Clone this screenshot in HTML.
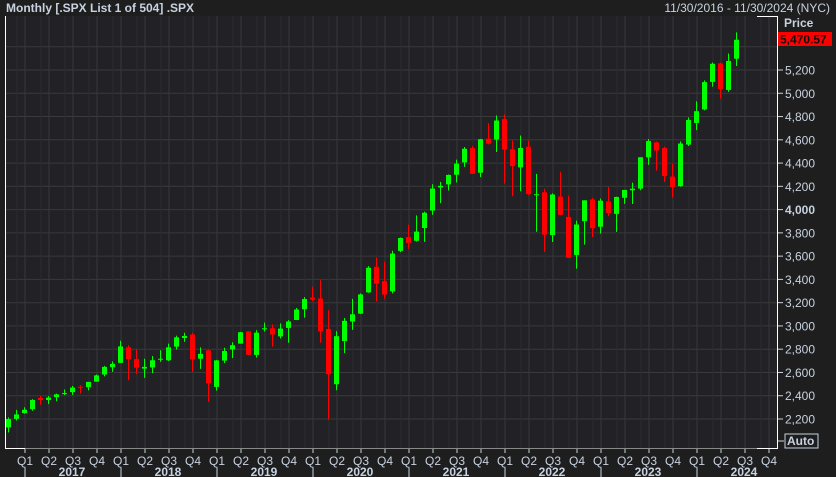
<!DOCTYPE html>
<html><head><meta charset="utf-8"><style>
html,body{margin:0;padding:0;background:#1e1e1e;width:836px;height:477px;overflow:hidden}
svg{display:block;font-family:"Liberation Sans",sans-serif}
</style></head><body>
<svg id="s" width="836" height="477" xmlns="http://www.w3.org/2000/svg">
<rect width="836" height="477" fill="#1e1e1e"/>
<rect x="5" y="16" width="772" height="433" fill="#222125"/>
<text x="6" y="12" font-size="12" font-weight="bold" fill="#c8d2e0">Monthly [.SPX List 1 of 504] .SPX</text>
<text x="830" y="12" font-size="12" fill="#c8d2e0" text-anchor="end">11/30/2016 - 11/30/2024 (NYC)</text>
<text x="784" y="27" font-size="12" font-weight="bold" fill="#c8d2e0">Price</text>
<g id="g"></g>
<rect x="778" y="32" width="54" height="14" fill="#ff0000"/>
<text x="780" y="43.5" font-size="12" font-weight="bold" fill="#111">5,470.57</text>
<rect x="785" y="434" width="33" height="14" fill="none" stroke="#c8d2e0" stroke-width="1"/>
<text x="787" y="445" font-size="12" font-weight="bold" fill="#c8d2e0">Auto</text>
<line x1="778" y1="441" x2="784" y2="441" stroke="#c8d2e0"/>
</svg>
<script>
var d=[[2128,2214,2084,2199],[2201,2278,2187,2239],[2251,2301,2245,2279],[2285,2371,2271,2364],[2381,2401,2322,2363],[2363,2398,2328,2384],[2388,2418,2353,2412],[2415,2454,2405,2423],[2431,2484,2407,2470],[2477,2491,2417,2472],[2474,2519,2446,2519],[2521,2582,2520,2575],[2583,2657,2566,2648],[2645,2695,2605,2674],[2683,2873,2682,2824],[2816,2835,2533,2714],[2715,2801,2585,2641],[2633,2718,2553,2648],[2643,2742,2594,2705],[2718,2791,2691,2718],[2705,2848,2699,2816],[2822,2917,2796,2902],[2896,2941,2864,2914],[2926,2940,2604,2712],[2718,2816,2631,2760],[2790,2800,2347,2507],[2476,2708,2444,2704],[2702,2813,2681,2784],[2798,2860,2723,2834],[2848,2949,2848,2946],[2953,2954,2751,2752],[2751,2964,2728,2942],[2971,3028,2952,2980],[2980,3014,2822,2926],[2910,3022,2892,2977],[2983,3050,2855,3038],[3051,3154,3050,3141],[3144,3248,3070,3231],[3244,3338,3214,3226],[3236,3394,2855,2954],[2974,3136,2192,2585],[2499,2955,2447,2912],[2870,3068,2766,3044],[3038,3233,2966,3100],[3105,3280,3101,3271],[3289,3514,3284,3500],[3508,3588,3210,3363],[3385,3550,3234,3270],[3297,3646,3280,3622],[3645,3760,3633,3756],[3764,3870,3662,3714],[3732,3950,3725,3811],[3842,3983,3723,3973],[3992,4218,3955,4181],[4191,4238,4056,4204],[4217,4302,4164,4298],[4300,4430,4233,4395],[4406,4538,4367,4523],[4529,4546,4306,4308],[4317,4608,4279,4605],[4610,4743,4560,4567],[4602,4809,4495,4766],[4778,4818,4223,4516],[4519,4595,4115,4374],[4363,4637,4158,4530],[4540,4593,4124,4132],[4131,4307,3810,4132],[4149,4178,3637,3785],[3781,4140,3721,4130],[4112,4325,3955,3955],[3937,4119,3584,3586],[3610,3905,3492,3872],[3901,4080,3699,4080],[4087,4101,3765,3840],[3853,4095,3794,4077],[4071,4195,3943,3970],[3963,4111,3809,4109],[4102,4170,4049,4169],[4166,4232,4048,4180],[4181,4449,4166,4450],[4450,4607,4385,4589],[4578,4584,4335,4508],[4530,4541,4238,4288],[4284,4393,4104,4194],[4201,4587,4197,4568],[4559,4793,4547,4770],[4745,4931,4683,4846],[4861,5111,4853,5096],[5098,5265,5057,5254],[5257,5264,4954,5036],[5029,5342,5012,5278],[5297,5523,5234,5460]];
function Y(p){return 419-(p-2200)*0.11633;}
var h='';
for(var p=2200;p<=5400;p+=200){var y=Y(p).toFixed(1);h+='<line x1="5" x2="777" y1="'+y+'" y2="'+y+'" stroke="#3a3a3c"/>';}
for(var x=25;x<777;x+=24){h+='<line x1="'+x+'" x2="'+x+'" y1="16" y2="449" stroke="#38383a"/>';}
for(var x=17;x<777;x+=24){h+='<line x1="'+x+'" x2="'+x+'" y1="16" y2="449" stroke="#2c2c2e"/>';}
for(var i=0;i<d.length;i++){var c=d[i],x=8+8*i,up=c[3]>=c[0],col=up?'#00ff00':'#ff0000';
var t=Y(Math.max(c[0],c[3])),b=Y(Math.min(c[0],c[3]));if(b-t<1)b=t+1;
h+='<line x1="'+x+'.5" x2="'+x+'.5" y1="'+Y(c[1])+'" y2="'+Y(c[2])+'" stroke="'+col+'"/>';
h+='<rect x="'+(x-2)+'" y="'+t+'" width="5" height="'+(b-t)+'" fill="'+col+'"/>';}
h+='<line x1="5.5" y1="16" x2="5.5" y2="449" stroke="#fff"/><line x1="5" y1="448.5" x2="25" y2="448.5" stroke="#fff"/>';
h+='<line x1="25" y1="448.5" x2="777" y2="448.5" stroke="#888"/><line x1="757" y1="448.5" x2="777" y2="448.5" stroke="#fff"/>';
h+='<line x1="757" y1="16.5" x2="777" y2="16.5" stroke="#fff"/><line x1="777.5" y1="16" x2="777.5" y2="449" stroke="#fff"/>';
for(var p=2200;p<=5200;p+=200){var y=Y(p);h+='<line x1="778" x2="783" y1="'+y+'" y2="'+y+'" stroke="#c8d2e0"/>';
h+='<text x="785" y="'+(y+4.5)+'" font-size="12" fill="#c8d2e0"'+(p==4000?' font-weight="bold"':'')+'>'+(p+'').replace(/(\d)(\d{3})$/,'$1,$2')+'</text>';}
var q=['Q1','Q2','Q3','Q4'];
for(var k=0;k<32;k++){var x=25+24*k;h+='<line x1="'+x+'" x2="'+x+'" y1="449" y2="453" stroke="#c8d2e0"/>';
h+='<text x="'+x+'" y="465" font-size="12" fill="#c8d2e0" text-anchor="middle">'+q[k%4]+'</text>';}
for(var yr=0;yr<8;yr++){var x=25+96*yr;h+='<line x1="'+x+'" x2="'+x+'" y1="467" y2="477" stroke="#c8d2e0"/>';
h+='<text x="'+(x+47)+'" y="476" font-size="12" font-weight="bold" fill="#c8d2e0" text-anchor="middle">'+(2017+yr)+'</text>';}
document.getElementById('g').innerHTML=h;
</script>
</body></html>
